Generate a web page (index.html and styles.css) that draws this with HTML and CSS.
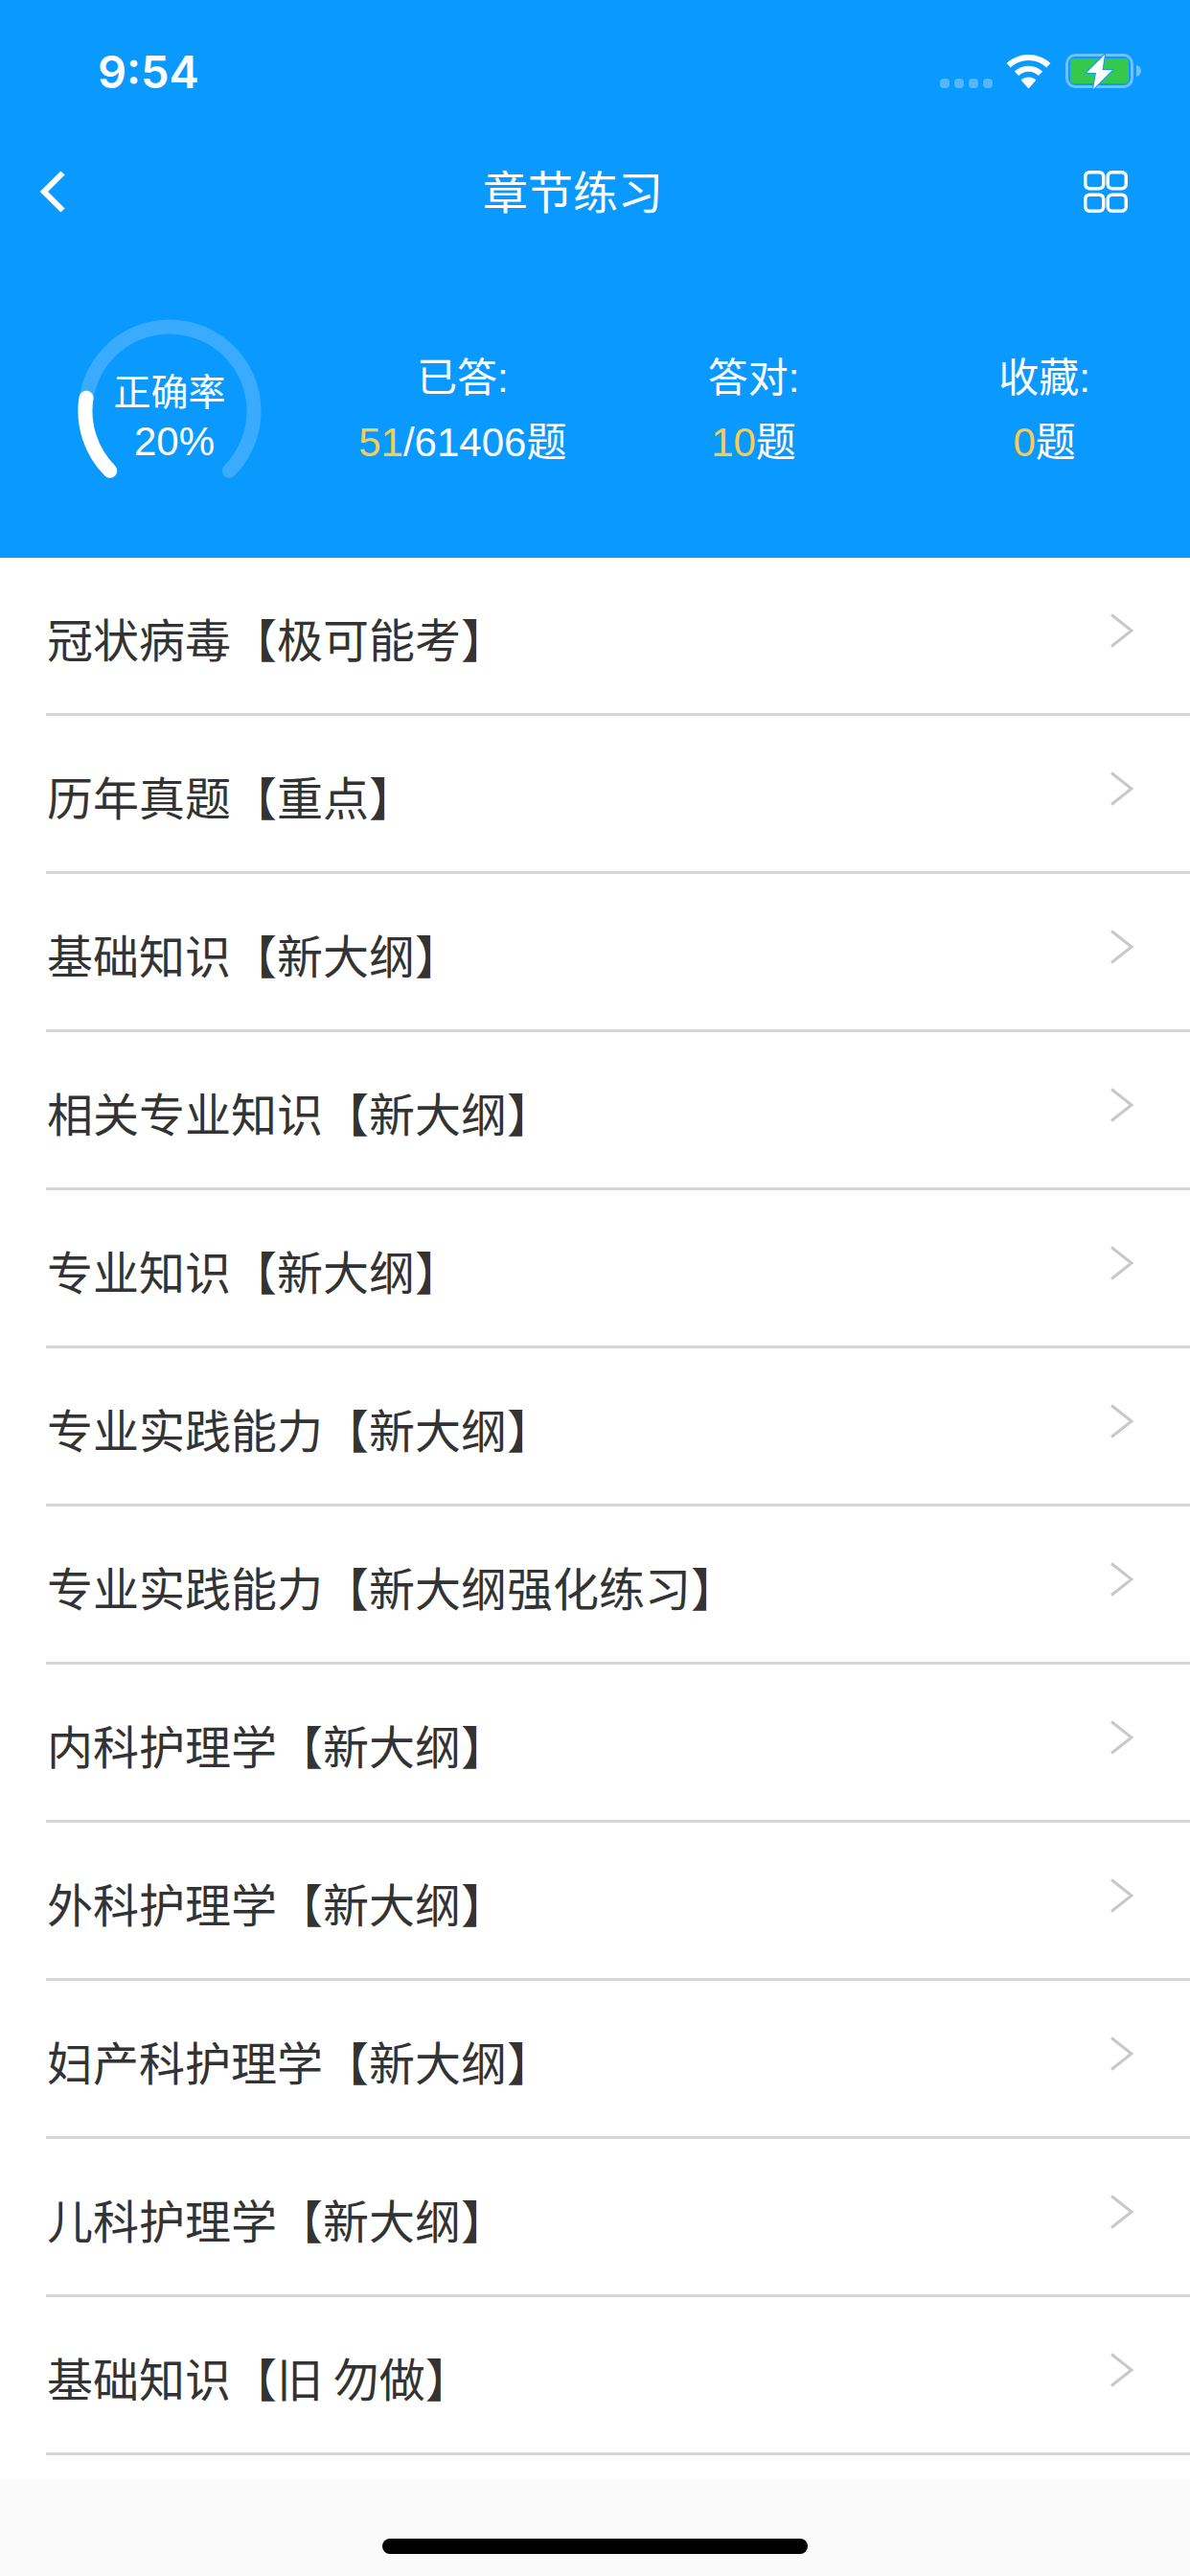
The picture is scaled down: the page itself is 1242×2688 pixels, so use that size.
FILE: index.html
```html
<!DOCTYPE html>
<html lang="zh-CN">
<head>
<meta charset="utf-8">
<title>章节练习</title>
<link rel="stylesheet" href="styles.css">
</head>
<body>
<div class="screen">
  <header class="hero">
    <div class="status">
      <span class="time">9:54</span>
      <div class="status-icons">
        <span class="signal"><i></i><i></i><i></i><i></i></span>
        <svg class="wifi" width="47" height="36" viewBox="0 0 47 36"><path fill="#fff" d="M23.5 0C14.6 0 6.6 3.400.6 9.100l4.200 4.400C9.600 8.900 16.200 6 23.500 6s13.900 2.900 18.700 7.500l4.200-4.400C40.400 3.400 32.400 0 23.500 0z"/><path fill="#fff" d="M23.500 11.800c-5.700 0-10.800 2.200-14.600 5.800l4.200 4.400c2.700-2.600 6.400-4.200 10.400-4.200s7.700 1.600 10.400 4.200l4.200-4.400c-3.800-3.600-8.900-5.800-14.600-5.800z"/><path fill="#fff" d="M23.500 23.600c-3 0-5.700 1.200-7.700 3.100l7.700 8.700 7.700-8.700c-2-1.900-4.700-3.100-7.700-3.100z"/></svg>
        <svg class="battery" width="80" height="38" viewBox="0 0 80 38"><rect x="1.500" y="1.500" width="68" height="33" rx="9" fill="none" stroke="#6cc1ff" stroke-width="3"/><rect x="5" y="5" width="61" height="26" rx="4" fill="#35c84d"/><path d="M74 12c3 .6 5 3 5 6s-2 5.400-5 6z" fill="#6cc1ff"/><path d="M41 1 22 20h10l-3 17 20-20H38.500z" fill="#fff" stroke="#0a99ff" stroke-width="2" paint-order="stroke" stroke-linejoin="round"/></svg>
      </div>
    </div>
    <nav class="nav">
      <svg class="back" width="27" height="44" viewBox="0 0 27 44"><path d="M24.500 2.500 5 22l19.500 19.500" fill="none" stroke="#fff" stroke-width="6"/></svg>
      <h1 class="title">章节练习</h1>
      <svg class="grid-icon" width="46" height="44" viewBox="0 0 46 44"><g fill="none" stroke="#fff" stroke-width="3.500"><rect x="1.750" y="1.750" width="19" height="17" rx="4.500"/><rect x="25.250" y="1.750" width="19" height="17" rx="4.500"/><rect x="1.750" y="25.250" width="19" height="17" rx="4.500"/><rect x="25.250" y="25.250" width="19" height="17" rx="4.500"/></g></svg>
    </nav>
    <section class="stats">
      <div class="gauge">
        <svg class="gauge-ring" width="192" height="192" viewBox="0 0 192 192"><path d="M33.800 158.200A88 88 0 1 1 158.200 158.200" fill="none" stroke="#3aacff" stroke-width="15" stroke-linecap="round"/><path d="M33.800 158.200A88 88 0 0 1 9 82.200" fill="none" stroke="#fff" stroke-width="15" stroke-linecap="round"/></svg>
        <div class="gauge-text">
          <span class="gauge-label">正确率</span>
          <span class="gauge-value">20%</span>
        </div>
      </div>
      <div class="stat-grid">
        <div class="stat"><span class="stat-label">已答:</span><span class="stat-value"><em>51</em>/61406题</span></div>
        <div class="stat"><span class="stat-label">答对:</span><span class="stat-value"><em>10</em>题</span></div>
        <div class="stat"><span class="stat-label">收藏:</span><span class="stat-value"><em>0</em>题</span></div>
      </div>
    </section>
  </header>
  <ul class="list">
    <li class="row"><span class="row-text">冠状病毒【极可能考】</span><svg class="chev" width="24" height="36" viewBox="0 0 24 36"><path d="M1 1.500 22 18 1 34.500" fill="none" stroke="#c8c8c8" stroke-width="3"/></svg></li>
    <li class="row"><span class="row-text">历年真题【重点】</span><svg class="chev" width="24" height="36" viewBox="0 0 24 36"><path d="M1 1.500 22 18 1 34.500" fill="none" stroke="#c8c8c8" stroke-width="3"/></svg></li>
    <li class="row"><span class="row-text">基础知识【新大纲】</span><svg class="chev" width="24" height="36" viewBox="0 0 24 36"><path d="M1 1.500 22 18 1 34.500" fill="none" stroke="#c8c8c8" stroke-width="3"/></svg></li>
    <li class="row"><span class="row-text">相关专业知识【新大纲】</span><svg class="chev" width="24" height="36" viewBox="0 0 24 36"><path d="M1 1.500 22 18 1 34.500" fill="none" stroke="#c8c8c8" stroke-width="3"/></svg></li>
    <li class="row"><span class="row-text">专业知识【新大纲】</span><svg class="chev" width="24" height="36" viewBox="0 0 24 36"><path d="M1 1.500 22 18 1 34.500" fill="none" stroke="#c8c8c8" stroke-width="3"/></svg></li>
    <li class="row"><span class="row-text">专业实践能力【新大纲】</span><svg class="chev" width="24" height="36" viewBox="0 0 24 36"><path d="M1 1.500 22 18 1 34.500" fill="none" stroke="#c8c8c8" stroke-width="3"/></svg></li>
    <li class="row"><span class="row-text">专业实践能力【新大纲强化练习】</span><svg class="chev" width="24" height="36" viewBox="0 0 24 36"><path d="M1 1.500 22 18 1 34.500" fill="none" stroke="#c8c8c8" stroke-width="3"/></svg></li>
    <li class="row"><span class="row-text">内科护理学【新大纲】</span><svg class="chev" width="24" height="36" viewBox="0 0 24 36"><path d="M1 1.500 22 18 1 34.500" fill="none" stroke="#c8c8c8" stroke-width="3"/></svg></li>
    <li class="row"><span class="row-text">外科护理学【新大纲】</span><svg class="chev" width="24" height="36" viewBox="0 0 24 36"><path d="M1 1.500 22 18 1 34.500" fill="none" stroke="#c8c8c8" stroke-width="3"/></svg></li>
    <li class="row"><span class="row-text">妇产科护理学【新大纲】</span><svg class="chev" width="24" height="36" viewBox="0 0 24 36"><path d="M1 1.500 22 18 1 34.500" fill="none" stroke="#c8c8c8" stroke-width="3"/></svg></li>
    <li class="row"><span class="row-text">儿科护理学【新大纲】</span><svg class="chev" width="24" height="36" viewBox="0 0 24 36"><path d="M1 1.500 22 18 1 34.500" fill="none" stroke="#c8c8c8" stroke-width="3"/></svg></li>
    <li class="row"><span class="row-text">基础知识【旧 勿做】</span><svg class="chev" width="24" height="36" viewBox="0 0 24 36"><path d="M1 1.500 22 18 1 34.500" fill="none" stroke="#c8c8c8" stroke-width="3"/></svg></li>
  </ul>
  <div class="home-area"><span class="home-bar"></span></div>
</div>
</body>
</html>
```
FILE: styles.css
```css
* { box-sizing: border-box; margin: 0; padding: 0; }
html, body { width: 1242px; height: 2688px; overflow: hidden; background: #fff; }
body { font-family: "Liberation Sans", "Noto Sans CJK SC", sans-serif; }
.screen { width: 1242px; height: 2688px; display: flex; flex-direction: column; }

.hero { height: 582px; background: #0a99ff; color: #fff; display: flex; flex-direction: column; flex: none; }

.status { height: 100px; padding: 50px 50px 0 102px; display: flex; justify-content: space-between; align-items: flex-start; }
.time { font-family: Inter, "Liberation Sans", sans-serif; font-weight: 600; font-size: 47px; line-height: 50px; }
.status-icons { display: flex; align-items: flex-start; padding-top: 6px; }
.signal { display: flex; gap: 4.500px; margin: 26px 14px 0 0; }
.signal i { width: 10.500px; height: 10px; border-radius: 4px; background: #55b7ff; display: block; }
.wifi { margin: 1px 15px 0 0; }

.nav { height: 46px; margin-top: 77px; padding: 0 65px 0 41px; display: flex; justify-content: space-between; align-items: center; }
.back { flex: none; }
.title { font-family: "Noto Sans CJK SC", sans-serif; font-weight: 400; font-size: 47px; line-height: 46px; margin: 0 0 5px -3px; }
.grid-icon { flex: none; }

.stats { flex: 1; display: flex; padding-top: 110px; align-items: flex-start; }
.gauge { width: 331px; flex: none; padding-left: 81px; position: relative; }
.gauge-ring { display: block; }
.gauge-text { position: absolute; left: 81px; top: 0; width: 192px; display: flex; flex-direction: column; align-items: center; padding-top: 46px; }
.gauge-label { font-family: "Noto Sans CJK SC", sans-serif; font-size: 39px; line-height: 54px; }
.gauge-value { font-size: 42px; line-height: 54px; margin: 1px 0 0 10px; }

.stat-grid { flex: 1; display: grid; grid-template-columns: repeat(3, 1fr); padding-top: 32px; }
.stat { display: flex; flex-direction: column; align-items: center; }
.stat-label { font-size: 42px; line-height: 60px; }
.stat-value { font-size: 42px; line-height: 60px; margin-top: 7px; }
.stat-value em { font-style: normal; color: #f5cd51; }

.list { list-style: none; flex: none; padding-left: 48px; }
.row { height: 165px; border-bottom: 3px solid #d6d6d6; display: flex; align-items: center; justify-content: space-between; padding-right: 59px; }
.row-text { font-family: "Noto Sans CJK SC", sans-serif; font-size: 48px; line-height: 60px; color: #333; padding: 3px 0 0 1px; }
.chev { flex: none; margin-bottom: 11px; }

.home-area { flex: 1; margin-top: 25px; background: #fafafa; display: flex; justify-content: center; align-items: flex-end; padding-bottom: 23px; }
.home-bar { width: 444px; height: 16px; border-radius: 8px; background: #000; display: block; }
```
